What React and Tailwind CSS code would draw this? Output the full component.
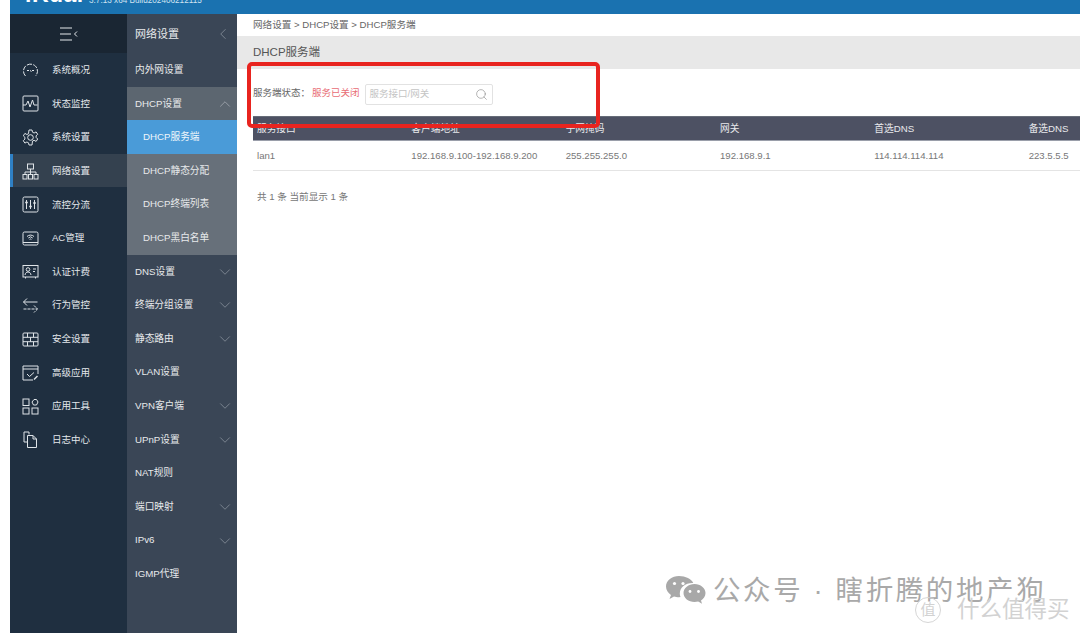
import { Search, ChevronDown, ChevronUp, ChevronLeft } from 'lucide-react';

const cn = '"Liberation Sans", "Noto Sans CJK SC", sans-serif';

const Ic = ({ children }) => (
  <svg width="17" height="17" viewBox="0 0 17 17" fill="none" stroke="#dfe4e8" strokeWidth="1" className="shrink-0">
    {children}
  </svg>
);

const icons = {
  gauge: (
    <Ic>
      <path d="M3.5 14A7 7 0 1 1 13.5 14" strokeDasharray="5 1.2" />
      <path d="M5 8.5h2M10 8.5h2M8 8.5l1.5 1" />
    </Ic>
  ),
  monitor: (
    <Ic>
      <rect x="1" y="1" width="15" height="15" rx="1" />
      <path d="M1 10h3l2-4 2 6 2.5-7 1.5 5h3.5" />
    </Ic>
  ),
  gear: (
    <Ic>
      <path d="M7 1h3l.5 2.2 1.6.8 2-1.1 1.6 2.4-1.6 1.5v1.6l1.6 1.6-1.6 2.4-2-1.1-1.6.8L10 16H7l-.5-2.2-1.6-.8-2 1.1-1.6-2.4 1.6-1.6V8.3L1.3 6.8l1.6-2.4 2 1.1 1.6-.8z" />
      <circle cx="8.5" cy="8.5" r="2.8" />
    </Ic>
  ),
  network: (
    <Ic>
      <rect x="5.5" y="1" width="6" height="5" />
      <rect x="1" y="11.5" width="4" height="4.5" />
      <rect x="6.5" y="11.5" width="4" height="4.5" />
      <rect x="12" y="11.5" width="4" height="4.5" />
      <path d="M8.5 6v5.5M3 11.5V9h11v2.5" />
    </Ic>
  ),
  flow: (
    <Ic>
      <rect x="1" y="1" width="15" height="15" rx="1.5" />
      <path d="M4.5 4v9M8.5 4v9M12.5 4v9" />
      <path d="M3.2 6.5h2.6M7.2 10.5h2.6M11.2 7h2.6" strokeWidth="1.6" />
    </Ic>
  ),
  ac: (
    <Ic>
      <rect x="1" y="2" width="15" height="13" rx="1.5" />
      <path d="M1 12.5h15" />
      <path d="M5 6.5a5 5 0 0 1 7 0M6.3 8a3 3 0 0 1 4.4 0M7.6 9.5a1.2 1.2 0 0 1 1.8 0" />
    </Ic>
  ),
  auth: (
    <Ic>
      <rect x="1" y="2.5" width="15" height="11.5" />
      <circle cx="6" cy="6.5" r="1.8" />
      <path d="M3 12c.3-2 1.5-3 3-3s2.7 1 3 3M11 6h3M11 8.5h2M3.5 14v1.5M13.5 14v1.5" />
    </Ic>
  ),
  swap: (
    <Ic>
      <path d="M15.5 5H1.5M5 1.5 1.5 5 5 8.5" />
      <path d="M1.5 12h14M12 8.5l3.5 3.5-3.5 3.5" strokeDasharray="3 1" />
    </Ic>
  ),
  wall: (
    <Ic>
      <rect x="1" y="2" width="15" height="13" rx="1" />
      <path d="M1 6.3h15M1 10.7h15M5.5 2v4.3M11.5 2v4.3M8.5 6.3v4.4M5.5 10.7V15M11.5 10.7V15" />
    </Ic>
  ),
  calendar: (
    <Ic>
      <path d="M16 10V2H1v14h10" />
      <path d="M1 5h15M5 10l2.5 2.5L12 8.5" />
      <path d="M12 15.5l3.5-3.5" strokeWidth="1.5" />
    </Ic>
  ),
  apps: (
    <Ic>
      <rect x="1" y="1" width="6" height="6.5" />
      <rect x="1" y="10" width="6" height="6" />
      <rect x="10" y="10" width="6" height="6" />
      <path d="M12 1.5h2.500L16 4l-1.500 3h-3L10 4z" />
    </Ic>
  ),
  files: (
    <Ic>
      <path d="M7 3.500V1H2v10h3" />
      <path d="M5.500 4.500H11L14.500 8v8.500h-9z" />
      <path d="M11 4.500V8h3.500" />
    </Ic>
  ),
};

const mainMenu = [
  ['gauge', '系统概况'],
  ['monitor', '状态监控'],
  ['gear', '系统设置'],
  ['network', '网络设置', true],
  ['flow', '流控分流'],
  ['ac', 'AC管理'],
  ['auth', '认证计费'],
  ['swap', '行为管控'],
  ['wall', '安全设置'],
  ['calendar', '高级应用'],
  ['apps', '应用工具'],
  ['files', '日志中心'],
];

const subMenu = [
  { label: '内外网设置' },
  { label: 'DHCP设置', open: true },
  { label: 'DHCP服务端', child: true, active: true },
  { label: 'DHCP静态分配', child: true },
  { label: 'DHCP终端列表', child: true },
  { label: 'DHCP黑白名单', child: true },
  { label: 'DNS设置', arrow: true },
  { label: '终端分组设置', arrow: true },
  { label: '静态路由', arrow: true },
  { label: 'VLAN设置' },
  { label: 'VPN客户端', arrow: true },
  { label: 'UPnP设置', arrow: true },
  { label: 'NAT规则' },
  { label: '端口映射', arrow: true },
  { label: 'IPv6', arrow: true },
  { label: 'IGMP代理' },
];

const subClass = (m) => {
  if (m.active) return 'bg-[#4a9bd8] text-[#eef6fb] pl-[16px]';
  if (m.child) return 'bg-[#67707a] text-[#e8eaec] pl-[16px]';
  if (m.open) return 'bg-[#5c6670] text-[#e8eaec] pl-[8px]';
  return 'text-[#e8eaec] pl-[8px]';
};

const columns = ['服务接口', '客户端地址', '子网掩码', '网关', '首选DNS', '备选DNS'];
const row = ['lan1', '192.168.9.100-192.168.9.200', '255.255.255.0', '192.168.9.1', '114.114.114.114', '223.5.5.5'];

export default function App() {
  return (
    <div className="relative h-[633px] w-[1080px] overflow-hidden bg-white pl-[10px]" style={{ fontFamily: cn }}>
      {/* top bar, cut off by the screenshot */}
      <div className="flex h-[14px] items-end overflow-hidden bg-[#1a72b0] pl-[15px]">
        <span className="mb-[5px] w-[56px] text-[23px] leading-[30px] font-bold tracking-[0.5px] text-white">iKuai</span>
        <span className="mb-[6px] ml-[8px] text-[8.2px] leading-[14px] whitespace-nowrap text-[#cfe3f1]">3.7.13 x64 Build202406212115</span>
      </div>

      <div className="flex h-[619px]">
        {/* main menu */}
        <div className="w-[117px] shrink-0 bg-[#1f2f40]">
          <div className="flex h-[39px] items-center justify-center bg-[#1a2633] pt-[1px]">
            <svg width="18" height="14" viewBox="0 0 18 14" fill="none" stroke="#e4e8ec" strokeWidth="1">
              <path d="M0 1h12M0 7h11M0 13h12M17 4.500 14.500 7l2.500 2.500" />
            </svg>
          </div>
          {mainMenu.map(([icon, label, active]) => (
            <div
              key={label}
              className={`flex h-[33.6px] items-center gap-[13px] pt-[1px] text-[9.5px] text-[#e4e8ec] ${active ? 'border-l-[3px] border-[#2f80c4] bg-[#34414f] pl-[9px]' : 'pl-[12px]'}`}
            >
              {icons[icon]}
              <span>{label}</span>
            </div>
          ))}
        </div>

        {/* sub menu */}
        <div className="w-[110px] shrink-0 bg-[#3a4656]">
          <div className="flex h-[39px] items-center justify-between pt-[1px] pr-[5px] pl-[8px] text-[11px] text-[#e8eaec]">
            <span>网络设置</span>
            <ChevronLeft size={18} strokeWidth={1} className="text-[#8d96a0]" />
          </div>
          {subMenu.map((m) => (
            <div key={m.label} className={`flex h-[33.6px] items-center justify-between pt-[1px] pr-[3px] text-[9.7px] ${subClass(m)}`}>
              <span>{m.label}</span>
              {m.arrow && <ChevronDown size={18} strokeWidth={1} className="text-[#8d96a0]" />}
              {m.open && <ChevronUp size={18} strokeWidth={1} className="text-[#a8aeb5]" />}
            </div>
          ))}
        </div>

        {/* content */}
        <div className="min-w-0 flex-1 overflow-hidden">
          <div className="flex h-[22px] items-center pl-[16px] text-[9.6px] text-[#666]">网络设置 &gt; DHCP设置 &gt; DHCP服务端</div>
          <div className="flex h-[33px] items-center bg-[#e8e8e8] pl-[16px] text-[11.5px] text-[#555]">DHCP服务端</div>
          <div className="flex h-[47px] items-center pt-[3px] pl-[16px] text-[9.5px]">
            <span className="mb-[2px] text-[#666]">服务端状态：</span>
            <span className="mb-[2px] ml-[2px] text-[#e86c74]">服务已关闭</span>
            <div className="ml-[5px] flex h-[21px] w-[128px] items-center justify-between rounded-[2px] border border-[#e2e2e2] pr-[4px] pl-[4px] text-[#c4c4c4]">
              <span>服务接口/网关</span>
              <Search size={13} strokeWidth={1} className="text-[#777]" />
            </div>
          </div>
          <div className="ml-[16px] w-[926px]">
            <div className="grid h-[25px] grid-cols-6 items-center border-t border-b border-t-[#666c78] border-b-[#9a9eaa] bg-[#4d5163] pt-[1px] text-[9.7px] text-[#e8e9ec]">
              {columns.map((c) => (
                <span key={c} className="pl-[4px]">{c}</span>
              ))}
            </div>
            <div className="grid h-[30px] grid-cols-6 items-center border-b border-[#e4e4e4] pt-[1px] text-[9.6px] text-[#777]">
              {row.map((c) => (
                <span key={c} className="pl-[4px] whitespace-nowrap">{c}</span>
              ))}
            </div>
            <div className="mt-[19px] pl-[4px] text-[9.6px] text-[#777]">共 1 条 当前显示 1 条</div>
          </div>
        </div>
      </div>

      {/* red annotation drawn over the screenshot */}
      <div className="absolute top-[62px] left-[247px] h-[66px] w-[353px] rounded-[5px] border-[4px] border-[#e8241f]" />

      {/* watermark */}
      <div className="absolute top-[574px] left-[665px] flex items-center text-[#a9a9a9]">
        <svg width="42" height="34" viewBox="0 0 42 34" fill="#a8a8a8">
          <path d="M14 2C7 2 1 6.5 1 12.5c0 3.5 2 6.500 5 8.500l-1.500 4 4.500-2.500c1.500.4 3 .7 5 .7l1.500-.1c-.5-1.200-.7-2.400-.7-3.600 0-6 5.500-10.500 12.500-10.500h1C26.500 5 20.500 2 14 2z" />
          <path d="M40.500 19c0-5-5-9-11-9s-11 4-11 9 5 9 11 9c1.300 0 2.500-.2 3.700-.5l3.800 2.200-1-3.300c2.700-1.700 4.500-4.400 4.500-7.400z" />
          <circle cx="9.5" cy="9.5" r="1.6" fill="#fff" />
          <circle cx="18" cy="9.5" r="1.6" fill="#fff" />
          <circle cx="25" cy="17.5" r="1.4" fill="#fff" />
          <circle cx="33.5" cy="17.5" r="1.4" fill="#fff" />
        </svg>
        <span className="ml-[6px] text-[27.5px] leading-[34px] tracking-[2.6px] whitespace-nowrap">公众号 · 瞎折腾的地产狗</span>
      </div>
      <div className="absolute top-[597px] left-[915px] flex items-center text-[#d2d2d2]">
        <span className="flex h-[26px] w-[26px] items-center justify-center rounded-full border border-[#d6d6d6] text-[15px]">值</span>
        <span className="ml-[16px] text-[22.5px] leading-[26px] whitespace-nowrap">什么值得买</span>
      </div>
    </div>
  );
}
